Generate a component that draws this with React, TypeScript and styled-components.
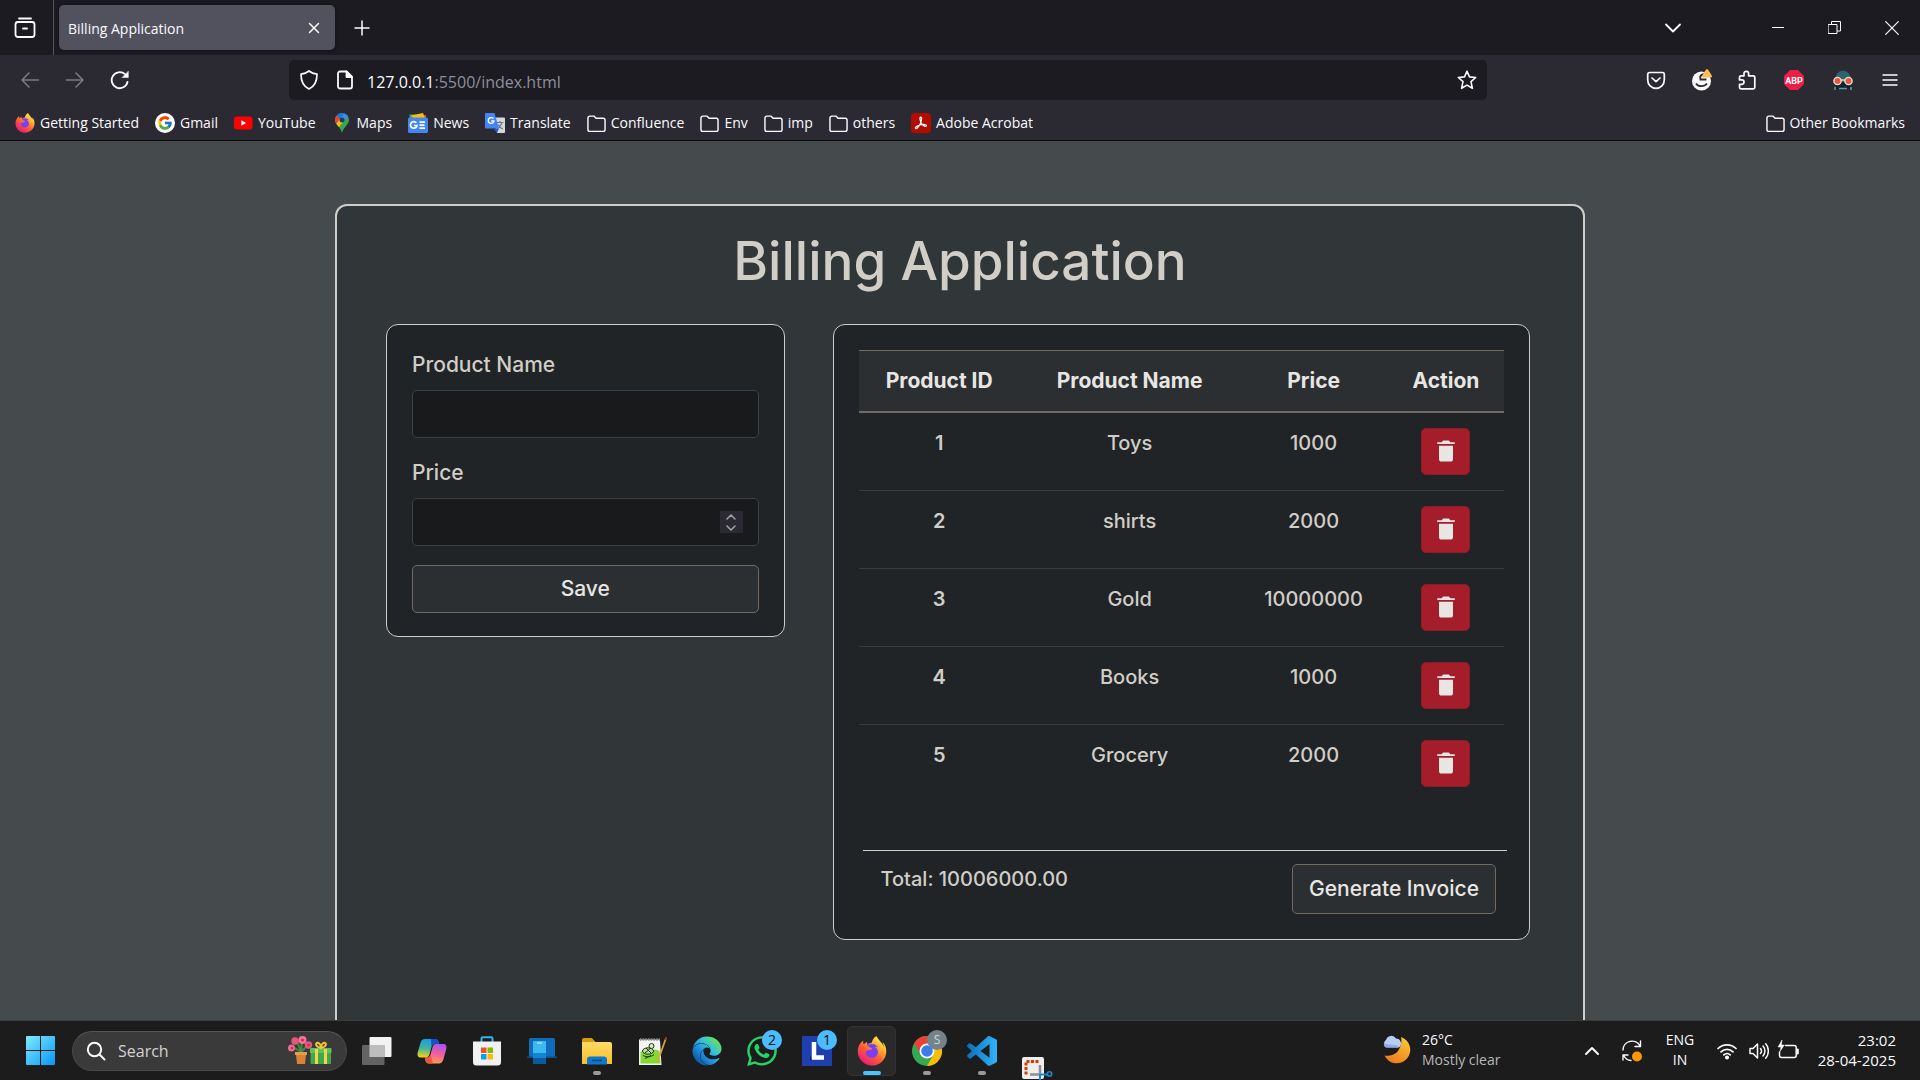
import React, { useState } from "react";
import styled, { createGlobalStyle, css } from "styled-components";
import { IoMdTrash } from "react-icons/io";
import { FaEdge, FaFirefoxBrowser, FaWhatsapp } from "react-icons/fa";
import { FcGoogle } from "react-icons/fc";
import { BiLogoVisualStudio } from "react-icons/bi";

const uiFont = `"Segoe UI", "Open Sans", "Noto Sans", sans-serif`;
const pageFont = `Inter, "Open Sans", sans-serif`;

const GlobalStyle = createGlobalStyle`
  *, *::before, *::after { box-sizing: border-box; }
  body { margin: 0; background: #1c1b22; }
  button, input { font: inherit; color: inherit; }
  button { padding: 0; border: 0; background: none; cursor: pointer; }
  svg { display: block; flex: none; }
`;

const Desktop = styled.div`
  display: flex;
  flex-direction: column;
  height: 100vh;
  overflow: hidden;
  font-family: ${uiFont};
  color: #fbfbfe;
`;

/* ---------- browser chrome ---------- */

const TabStrip = styled.header`
  display: flex;
  align-items: center;
  height: 55px;
  flex: none;
  background: #1c1b22;
`;

const IconButton = styled.button<{ $w?: number; $dim?: boolean }>`
  display: flex;
  align-items: center;
  justify-content: center;
  width: ${(p) => p.$w ?? 45}px;
  height: 40px;
  flex: none;
  color: ${(p) => (p.$dim ? "#7c7b82" : "#fbfbfe")};
`;

const LibraryCell = styled.div`
  display: flex;
  align-items: center;
  height: 100%;
  padding-right: 4px;
  border-right: 1px solid #55545c;
`;

const Tab = styled.div`
  display: flex;
  align-items: center;
  justify-content: space-between;
  width: 276px;
  height: 45px;
  margin: 0 4px 0 5px;
  padding: 1px 0 0 9px;
  border-radius: 5px;
  background: #52525e;
  font-size: 14px;
  box-shadow: 0 0 4px rgba(0, 0, 0, 0.5);
`;

const WindowControls = styled.div`
  display: flex;
  margin-left: 51px;
`;

const Spacer = styled.div`
  flex: 1;
`;

const NavBar = styled.div`
  display: flex;
  align-items: center;
  height: 50px;
  flex: none;
  padding: 0 8px 0 7px;
  background: #2b2a33;
`;

const AddressBar = styled.form`
  display: flex;
  align-items: center;
  flex: 0 1 1198px;
  height: 40px;
  margin-left: 147px;
  border-radius: 5px;
  background: #1c1b22;
`;

const Address = styled.div`
  flex: 1;
  margin-left: 6px;
  padding-top: 3px;
  font-size: 16px;
  color: #8f8f99;
  span { color: #fbfbfe; }
`;

const Extensions = styled.div`
  display: flex;
  align-items: center;
`;

const BookmarksBar = styled.nav`
  display: flex;
  align-items: center;
  height: 36px;
  flex: none;
  padding: 1px 7px 0 7px;
  background: #2b2a33;
  border-bottom: 1px solid #0c0c0d;
`;

const Bookmark = styled.a`
  display: flex;
  align-items: center;
  gap: 5px;
  padding: 0 8px;
  font-size: 14px;
  line-height: 20px;
  white-space: nowrap;
  color: #fbfbfe;
  text-decoration: none;
`;

/* ---------- billing page ---------- */

const Viewport = styled.main`
  flex: 1;
  min-height: 0;
  overflow: hidden;
  padding-top: 63px;
  background: #454a4d;
  font-family: ${pageFont};
  font-size: 20px;
  line-height: 30px;
  font-weight: 500;
  color: #d1cdc7;
`;

const Container = styled.section`
  max-width: 1250px;
  min-height: 1000px;
  margin: 0 auto;
  padding: 25px 53px 50px 49px;
  border: 2px solid #d1cdc7;
  border-radius: 12px;
  background: #313638;
`;

const Title = styled.h1`
  margin: 0 0 33px;
  padding-left: 4px;
  text-align: center;
  font-size: 53px;
  line-height: 60px;
  font-weight: 500;
`;

const Columns = styled.div`
  display: grid;
  grid-template-columns: minmax(0, 4fr) minmax(0, 7fr);
  gap: 48px;
  align-items: start;
`;

const Card = styled.div`
  padding: 25px;
  border: 1px solid #d1cdc7;
  border-radius: 12px;
  background: #202426;
`;

const ProductForm = styled(Card).attrs({ as: "form" })`
  padding-bottom: 23px;
  font-size: 21px;
`;

const Field = styled.div`
  display: flex;
  flex-direction: column;
  gap: 10px;
  margin-bottom: 20px;
  & + & { margin-bottom: 19px; }
`;

const InputBox = styled.div`
  display: flex;
  align-items: center;
  height: 48px;
  padding: 0 15px;
  border: 1px solid #3b4144;
  border-radius: 5px;
  background: #181a1b;
`;

const TextInput = styled.input`
  flex: 1;
  min-width: 0;
  padding: 0;
  border: 0;
  outline: 0;
  background: transparent;
  appearance: textfield;
  &::-webkit-inner-spin-button { appearance: none; }
`;

const Stepper = styled.div`
  display: flex;
  flex-direction: column;
  width: 23px;
  height: 22px;
  background: #2b2a33;
  color: #a3a3ac;
  button {
    display: flex;
    flex: 1;
    align-items: center;
    justify-content: center;
  }
`;

const buttonLook = css`
  border: 1px solid #736b5e;
  border-radius: 5px;
  background: #2b2f31;
  color: #e8e6e3;
  font-size: 21px;
`;

const SaveButton = styled.button`
  ${buttonLook}
  width: 100%;
  height: 48px;
`;

const InvoiceButton = styled.button`
  ${buttonLook}
  width: 204px;
  height: 50px;
  white-space: nowrap;
`;

const Table = styled.table`
  width: 100%;
  border-collapse: collapse;
  table-layout: fixed;
  text-align: center;
  thead th {
    height: 61px;
    padding: 0;
    border-top: 1px solid #736b5e;
    border-bottom: 2px solid #736b5e;
    background: #2b2f31;
    color: #e8e6e3;
    font-size: 21px;
    font-weight: 700;
  }
  tbody th, tbody td {
    height: 78px;
    padding: 15px 0;
    border-top: 1px solid #373c3e;
    vertical-align: top;
    font-weight: 500;
  }
  tbody th { font-weight: 600; }
`;

const DeleteButton = styled.button`
  display: flex;
  align-items: center;
  justify-content: center;
  width: 49px;
  height: 47px;
  margin: 0 auto;
  border: 1px solid #8e1c28;
  border-radius: 5px;
  background: #a51d2a;
  color: #e8e6e3;
`;

const TotalRow = styled.div`
  display: flex;
  justify-content: space-between;
  margin: 48px -3px 0 4px;
  padding: 13px 11px 0 18px;
  border-top: 1px solid #d1cdc7;
`;

/* ---------- taskbar ---------- */

const Taskbar = styled.footer`
  display: flex;
  align-items: center;
  height: 60px;
  flex: none;
  padding: 0 24px 0 13px;
  border-top: 1px solid #3a3c3d;
  background: #1c1c1c;
  font-size: 14px;
  line-height: 20px;
`;

const TaskItem = styled.button<{ $active?: boolean; $end?: boolean }>`
  position: relative;
  display: flex;
  align-items: center;
  justify-content: center;
  width: 49px;
  height: 50px;
  margin: 0 3px;
  flex: none;
  align-self: ${(p) => (p.$end ? "flex-end" : "center")};
  border: 1px solid ${(p) => (p.$active ? "#333" : "transparent")};
  border-radius: 5px;
  background: ${(p) => (p.$active ? "#292929" : "transparent")};
  ${(p) => p.$end && "height: 23px;"}
`;

const Running = styled.span<{ $active?: boolean }>`
  position: absolute;
  bottom: 0;
  left: 50%;
  width: ${(p) => (p.$active ? 18 : 8)}px;
  height: 4px;
  transform: translateX(-50%);
  border-radius: 2px;
  background: ${(p) => (p.$active ? "#4cc2ff" : "#9a9a9a")};
`;

const Badge = styled.span<{ $grey?: boolean }>`
  position: absolute;
  top: 3px;
  right: 3px;
  width: 20px;
  height: 20px;
  border-radius: 50%;
  text-align: center;
  font-size: ${(p) => (p.$grey ? 12 : 14)}px;
  background: ${(p) => (p.$grey ? "#74828b" : "#4cbcff")};
  color: ${(p) => (p.$grey ? "#cfd6da" : "#111")};
`;

const SearchPill = styled.label`
  display: flex;
  align-items: center;
  width: 275px;
  height: 40px;
  margin: 0 2px 0 4px;
  padding: 0 14px 0 13px;
  border: 1px solid #474747;
  border-top-color: #565656;
  border-radius: 20px;
  background: #3a3a3a;
  font-size: 16px;
  input {
    flex: 1;
    min-width: 0;
    margin-left: 12px;
    padding: 0;
    border: 0;
    outline: 0;
    background: transparent;
    color: #d2d2d2;
  }
  input::placeholder { color: #d2d2d2; opacity: 1; }
`;

const Weather = styled.div`
  display: flex;
  align-items: center;
  gap: 10px;
  width: 191px;
  padding-bottom: 2px;
  small {
    display: block;
    font-size: 14px;
    color: #b8b8b8;
  }
`;

const Language = styled.div`
  width: 56px;
  padding-bottom: 2px;
  text-align: center;
`;

const Clock = styled.div`
  width: 92px;
  padding-bottom: 2px;
  font-size: 15px;
  text-align: right;
`;

/* ---------- drawings ---------- */

type StrokeProps = { size?: number; w?: number; children: React.ReactNode; box?: number };

const Stroke = ({ size = 20, w = 1.5, box = 20, children }: StrokeProps) => (
  <svg
    width={size}
    height={size}
    viewBox={`0 0 ${box} ${box}`}
    fill="none"
    stroke="currentColor"
    strokeWidth={w}
    strokeLinecap="round"
    strokeLinejoin="round"
  >
    {children}
  </svg>
);

const HiddenSvg = styled.svg`
  position: absolute;
`;

const Gradients = () => (
  <HiddenSvg width="0" height="0" aria-hidden="true">
    <defs>
      <linearGradient id="fox" x1="0.85" y1="0.05" x2="0.2" y2="0.95">
        <stop offset="0" stopColor="#fff44f" />
        <stop offset="0.3" stopColor="#ffb02e" />
        <stop offset="0.6" stopColor="#ff5a36" />
        <stop offset="1" stopColor="#e8197d" />
      </linearGradient>
      <linearGradient id="edge" x1="0.9" y1="0.2" x2="0.2" y2="0.9">
        <stop offset="0" stopColor="#66dd66" />
        <stop offset="0.35" stopColor="#33c3d8" />
        <stop offset="0.65" stopColor="#1f8fe0" />
        <stop offset="1" stopColor="#0c59a4" />
      </linearGradient>
      <linearGradient id="win" x1="0" y1="0" x2="1" y2="1">
        <stop offset="0" stopColor="#7cecff" />
        <stop offset="1" stopColor="#0a96f5" />
      </linearGradient>
      <linearGradient id="moon" x1="0.8" y1="0" x2="0.3" y2="1">
        <stop offset="0" stopColor="#fcc838" />
        <stop offset="1" stopColor="#ee7a1b" />
      </linearGradient>
      <linearGradient id="copilotA" x1="0.5" y1="0" x2="0.4" y2="1">
        <stop offset="0" stopColor="#1a9bf0" />
        <stop offset="0.5" stopColor="#3bb5a0" />
        <stop offset="1" stopColor="#f7d117" />
      </linearGradient>
      <linearGradient id="copilotB" x1="0.6" y1="0" x2="0.4" y2="1">
        <stop offset="0" stopColor="#a855f0" />
        <stop offset="0.5" stopColor="#f0609a" />
        <stop offset="1" stopColor="#ff9a4d" />
      </linearGradient>
      <linearGradient id="folder" x1="0" y1="0" x2="0" y2="1">
        <stop offset="0" stopColor="#ffd969" />
        <stop offset="1" stopColor="#fbbf24" />
      </linearGradient>
      <linearGradient id="vscode" x1="0" y1="0" x2="1" y2="0">
        <stop offset="0" stopColor="#0a6fbd" />
        <stop offset="1" stopColor="#33b2f7" />
      </linearGradient>
    </defs>
  </HiddenSvg>
);

const Firefox = ({ size }: { size: number }) => (
  <svg width={size} height={size} viewBox="0 0 32 32">
    <circle cx="15.5" cy="16" r="9" fill="#7a3ff0" />
    <FaFirefoxBrowser size={32} fill="url(#fox)" />
  </svg>
);

const Folder = () => (
  <Stroke size={19}>
    <path d="M1 4.200a2 2 0 0 1 2-2h4.300l2.200 2.300h7.500a2 2 0 0 1 2 2v9.800a2 2 0 0 1-2 2H3a2 2 0 0 1-2-2z" />
  </Stroke>
);

const YouTube = () => (
  <svg width="19" height="20" viewBox="0 0 19 20">
    <rect y="3.5" width="18.5" height="13" rx="3" fill="#f00" />
    <path d="M7.3 7.3v5.4l4.8-2.7z" fill="#fff" />
  </svg>
);

const Maps = () => (
  <svg width="20" height="20" viewBox="0 0 20 20">
    <path d="M10 0a7 7 0 0 0-7 7c0 4.5 5.3 6.500 7 13 1.700-6.500 7-8.500 7-13a7 7 0 0 0-7-7z" fill="#34a853" />
    <path d="M10 0a7 7 0 0 0-5.400 2.500L8 5.500 12.200.4A7 7 0 0 0 10 0z" fill="#1a73e8" />
    <path d="M4.600 2.500A7 7 0 0 0 3 7c0 1.500.6 2.700 1.300 3.800L8.200 6z" fill="#ea4335" />
    <path d="M4.300 10.800 11.800 9 8 5.800zM4.300 10.800l2.500 3.200 5.400-6.200z" fill="#fbbc04" />
    <path d="m12.200.4-4.200 5 3.800 3.400 4.400-5.200A7 7 0 0 0 12.200.4z" fill="#4285f4" />
    <circle cx="10" cy="7" r="2.500" fill="#1c3f5e" />
  </svg>
);

const News = () => (
  <svg width="20" height="20" viewBox="0 0 20 20">
    <path d="M1.500 1.500h8l2 4h-10z" fill="#34a853" />
    <path d="M9 2h9v4H9z" fill="#ea4335" />
    <path d="M3 2.500 15 0l2 5H5z" fill="#fbbc04" />
    <rect y="4.500" width="20" height="15.500" rx="1.500" fill="#4285f4" />
    <path d="M8.300 9.800a3.300 3.300 0 1 0 .7 2.700H6M11.500 9.200H17M11.500 12.200h5M11.500 15.200H17" fill="none" stroke="#fff" strokeWidth="1.700" />
  </svg>
);

const Translate = () => (
  <svg width="20" height="20" viewBox="0 0 20 20">
    <path d="M8 4.500h11a1 1 0 0 1 1 1V19a1 1 0 0 1-1 1h-7z" fill="#d6d8db" />
    <path d="M11.500 9.500h7M15 8v1.500M17 9.500c-.8 3-2.500 4.700-4.500 6M13 11.500c1 2 2.700 3.500 4.800 4.400" stroke="#6b7b8c" strokeWidth="1.200" fill="none" />
    <path d="M1 0h8.500L14 15.500H1a1 1 0 0 1-1-1V1a1 1 0 0 1 1-1z" fill="#4285f4" />
    <path d="M8.400 5.700a2.900 2.900 0 1 0 .6 2.300H6.200" stroke="#fff" strokeWidth="1.300" fill="none" />
    <path d="M8.500 15.500H14L12 20z" fill="#2857c4" />
  </svg>
);

const Acrobat = () => (
  <svg width="20" height="20" viewBox="0 0 20 20">
    <rect width="20" height="20" rx="3.500" fill="#b30b00" />
    <path d="M9.700 4.200c1.700 0 .7 4.800-1.400 8.300-1.300 2.200-2.900 3.500-3.700 2.900-1.500-1.300 3.600-3.700 7-3.900 2.500-.2 4 .5 3.800 1.400-.4 1.700-4.100-.5-5.300-3.100C9 7.300 8.400 4.200 9.700 4.200z" fill="none" stroke="#fff" strokeWidth="1.200" />
  </svg>
);

const CloudMoon = () => (
  <svg width="31" height="31" viewBox="0 0 31 31">
    <path d="M20 3a13.500 13.500 0 1 1-16.500 18.500c3 1 10 0 13.500-4.500S21 6 20 3z" fill="url(#moon)" />
    <path d="M5 13.500a4.500 4.500 0 0 1 0-7.500 5.500 5.500 0 0 1 10-1.500 5 5 0 0 1 3 9z" fill="#b9ccf5" />
    <path d="M5 13.500A4 4 0 0 1 3 9c4 3 10 0 15 3.500a3 3 0 0 1-1 1z" fill="#8facea" />
  </svg>
);

const SearchGifts = () => (
  <svg width="44" height="30" viewBox="0 0 44 30">
    <path d="M13 16 5 11M13 16 9 5M13 16l1-11M13 16l8-8" stroke="#3e8e41" strokeWidth="2" />
    <circle cx="7" cy="5" r="3.700" fill="#e8567c" />
    <circle cx="14.500" cy="4" r="4" fill="#f27696" />
    <circle cx="3.500" cy="12" r="3.500" fill="#ef6c90" />
    <circle cx="20.500" cy="9" r="3.700" fill="#e8567c" />
    <circle cx="14.500" cy="4" r="1.500" fill="#c92d57" />
    <circle cx="4" cy="12" r="1.300" fill="#c92d57" />
    <circle cx="20.500" cy="9" r="1.300" fill="#c92d57" />
    <path d="M7 16h12v3h-1l-1 9H9L8 19H7z" fill="#d98238" />
    <path d="M7 16h12v3H7z" fill="#e99950" />
    <rect x="22.500" y="13" width="20.500" height="15" rx="1" fill="#3fa84e" />
    <rect x="22" y="12" width="21.500" height="5" rx="1" fill="#5cc45f" />
    <path d="M27 13h3v15h-3zM36 13h3v15h-3z" fill="#f7d34a" />
    <path d="M33 12c-5-1-6-4-4-5s4 2 4 5c0-3 2-6 4-5s1 4-4 5z" fill="none" stroke="#f7c52e" strokeWidth="2" />
  </svg>
);

const TaskView = () => (
  <svg width="30" height="30" viewBox="0 0 30 30">
    <rect x="7.500" y="1" width="22" height="20" rx="1" fill="#f2f2f2" />
    <rect y="9" width="22.500" height="20" rx="1" fill="#6b6b6b" opacity=".9" />
    <path d="M7.500 9h15v12h-15z" fill="#bdbdbd" />
  </svg>
);

const Copilot = () => (
  <svg width="30" height="30" viewBox="0 0 30 30">
    <path d="M8 3h10c2 0 3 1 3.500 3l.5 2h-4c-2 0-3 1-3.500 3l-2 7c-.6 2-1.500 3.500-4 3.500H4c-3 0-4-2-3.300-5L3.500 7C4.200 4.500 5.500 3 8 3z" fill="url(#copilotA)" />
    <path d="M14 3h4c2 0 3 1 3.500 3l.5 2h-4c-2 0-3 1-3.500 3z" fill="#1450c8" />
    <path d="M22 27.500H12c-2 0-3-1-3.500-3L8 21.500h2c2 0 3-1 3.500-3l2-7c.6-2 1.500-3.500 4-3.500H26c3 0 4 2 3.300 5l-2.800 10c-.7 2.500-2 4.500-4.500 4.500z" fill="url(#copilotB)" />
    <path d="M16 27.500h-4c-2 0-3-1-3.500-3L8 21.500h2c2 0 3-1 3.500-3z" fill="#f2533c" />
  </svg>
);

const Store = () => (
  <svg width="30" height="30" viewBox="0 0 30 30">
    <path d="M9.500 7V2.500a1.200 1.200 0 0 1 1.200-1.200h8.600a1.200 1.200 0 0 1 1.200 1.200V7" fill="none" stroke="#2db7f0" strokeWidth="2" />
    <path d="M1 5.500h28V26a3.500 3.500 0 0 1-3.500 3.500h-21A3.500 3.500 0 0 1 1 26z" fill="#f1f1f1" />
    <path d="M9 11.500h5.500V17H9z" fill="#f25022" />
    <path d="M15.500 11.500H21V17h-5.500z" fill="#7fba00" />
    <path d="M9 18h5.500v5.500H9z" fill="#00a4ef" />
    <path d="M15.500 18H21v5.500h-5.500z" fill="#ffb900" />
  </svg>
);

const PhoneLink = () => (
  <svg width="30" height="30" viewBox="0 0 30 30">
    <rect x="2" y="2" width="26" height="19" rx="1.500" fill="#0f6cbd" />
    <path d="M0 20.500h30v1.500H0z" fill="#0a4f92" />
    <path d="M7 5h11a1 1 0 0 1 1 1v11H6V6a1 1 0 0 1 1-1z" fill="#3db8f0" />
    <path d="M6 17h13v11H6z" fill="#1486d0" />
    <path d="M6 22h13v6H6z" fill="#0b5a9e" />
    <path d="M10 7h5" stroke="#c8f1ff" strokeWidth="1.200" />
  </svg>
);

const Explorer = () => (
  <svg width="30" height="30" viewBox="0 0 30 30">
    <path d="M0 4a2 2 0 0 1 2-2h8l3.500 4H0z" fill="#d99a0b" />
    <path d="M0 6h28a2 2 0 0 1 2 2v20H0z" fill="url(#folder)" />
    <path d="M5 28.500v-5a3 3 0 0 1 3-3h14a3 3 0 0 1 3 3v5z" fill="#1078cc" />
    <path d="M10 24.500h10" stroke="#0a4a8a" strokeWidth="1.600" />
  </svg>
);

const NotepadPP = () => (
  <svg width="30" height="30" viewBox="0 0 30 30">
    <path d="M2 3.500h21l1.500 25.500H2z" fill="#f4f4ee" />
    <path d="M3.500 16c6-3 14-3 19-1l1 12.500h-20z" fill="#84d936" />
    <path d="M3 3.500h20" stroke="#8b8b8b" strokeWidth="2.500" strokeDasharray="1.500 1.200" />
    <ellipse cx="11" cy="15" rx="5.500" ry="3.200" fill="#b9dfa0" stroke="#24331c" />
    <circle cx="14.500" cy="10" r="2.500" fill="#d5ecc4" stroke="#24331c" />
    <path d="M6 19.500c4 2 8 1.500 11-1M8 22.500l6-3M9 12l5 5M14 12l-6 5" stroke="#24331c" fill="none" />
    <path d="M29 2 20.500 26" stroke="#e8a13a" strokeWidth="1.700" />
    <path d="m29.500 1-1 3" stroke="#8c3a2b" strokeWidth="2" />
  </svg>
);

const Chrome = () => (
  <svg width="30" height="30" viewBox="0 0 30 30">
    <circle cx="15" cy="15" r="15" fill="#34a853" />
    <path d="M2 7.500A15 15 0 0 1 28 7.500H15L9 18.500z" fill="#ea4335" />
    <path d="M28 7.500A15 15 0 0 1 15 30l6.500-11.500L15 7.500z" fill="#fbbc04" />
    <circle cx="15" cy="15" r="7.500" fill="#fff" />
    <circle cx="15" cy="15" r="5.800" fill="#3b7ded" />
  </svg>
);

const LApp = () => (
  <svg width="30" height="30" viewBox="0 0 30 30">
    <path d="M0 0h30v30H0z" fill="#1f3fae" />
    <path d="m8 20 3 3-3 2z" fill="#101f5c" />
    <path d="M12 6v15.500h10" fill="none" stroke="#fff" strokeWidth="4.500" />
  </svg>
);

const Snip = () => (
  <svg width="32" height="23" viewBox="0 0 32 23">
    <rect x="1" width="22" height="22" rx="2" fill="#eee" />
    <path d="M5 17.500V4.500H18" fill="none" stroke="#d83b01" strokeWidth="3" strokeDasharray="3 1.500" />
    <path d="M9 17.500h10V8" fill="none" stroke="#8b9096" strokeWidth="2.500" />
    <path d="M19 17.500h7M19 17v6" stroke="#1887d3" strokeWidth="2" />
    <circle cx="28.500" cy="17" r="2.200" fill="none" stroke="#1887d3" strokeWidth="1.600" />
  </svg>
);

const bookmarks: { label: string; icon: React.ReactNode }[] = [
  { label: "Getting Started", icon: <Firefox size={20} /> },
  {
    label: "Gmail",
    icon: (
      <svg width="20" height="20" viewBox="0 0 20 20">
        <circle cx="10" cy="10" r="10" fill="#fff" />
        <FcGoogle size={16} x={2} y={2} />
      </svg>
    ),
  },
  { label: "YouTube", icon: <YouTube /> },
  { label: "Maps", icon: <Maps /> },
  { label: "News", icon: <News /> },
  { label: "Translate", icon: <Translate /> },
  { label: "Confluence", icon: <Folder /> },
  { label: "Env", icon: <Folder /> },
  { label: "imp", icon: <Folder /> },
  { label: "others", icon: <Folder /> },
  { label: "Adobe Acrobat", icon: <Acrobat /> },
];

const initialProducts = [
  { id: 1, name: "Toys", price: 1000 },
  { id: 2, name: "shirts", price: 2000 },
  { id: 3, name: "Gold", price: 10000000 },
  { id: 4, name: "Books", price: 1000 },
  { id: 5, name: "Grocery", price: 2000 },
];

const BrowserChrome = () => (
  <>
    <TabStrip>
      <LibraryCell>
        <IconButton $w={49} aria-label="Recent browsing">
          <Stroke w={1.8} size={22} box={22}>
            <path d="M5 1.500h12" />
            <path d="M3.500 4.800h15" />
            <rect x="1.500" y="5" width="19" height="15" rx="2.500" />
            <path d="M9 11.500h4" />
          </Stroke>
        </IconButton>
      </LibraryCell>
      <Tab>
        Billing Application
        <IconButton $w={42} aria-label="Close tab">
          <Stroke size={12} box={12}><path d="m1.500 1.500 9 9M10.500 1.500l-9 9" /></Stroke>
        </IconButton>
      </Tab>
      <IconButton aria-label="New tab">
        <Stroke size={16} box={16}><path d="M8 1v14M1 8h14" /></Stroke>
      </IconButton>
      <Spacer />
      <IconButton $w={50} aria-label="List all tabs">
        <Stroke w={1.800}><path d="m3 6.500 7 7 7-7" /></Stroke>
      </IconButton>
      <WindowControls>
        <IconButton $w={57} aria-label="Minimise">
          <Stroke w={1} size={12} box={12}><path d="M0 5.500h12" /></Stroke>
        </IconButton>
        <IconButton $w={57} aria-label="Restore">
          <Stroke w={1} size={13} box={13}><path d="M.5 3.500h8.500v9H.5zM3.500 3V.5h9v9.500H9.500" strokeLinejoin="miter" /></Stroke>
        </IconButton>
        <IconButton $w={57} aria-label="Close window">
          <Stroke w={1.200} size={14} box={14}><path d="m.7.700 12.600 12.600M13.300.700.700 13.300" /></Stroke>
        </IconButton>
      </WindowControls>
    </TabStrip>

    <NavBar>
      <IconButton $dim aria-label="Back">
        <Stroke><path d="M18.500 10H2M9 3l-7 7 7 7" /></Stroke>
      </IconButton>
      <IconButton $dim aria-label="Forward">
        <Stroke><path d="M1.500 10H18M11 3l7 7-7 7" /></Stroke>
      </IconButton>
      <IconButton aria-label="Reload">
        <Stroke w={1.800}>
          <path d="M17.500 12A8 8 0 1 1 15 4.200l2 1.800" />
          <path d="M18.300 1.500v6h-6z" fill="currentColor" strokeWidth="0.500" />
        </Stroke>
      </IconButton>
      <AddressBar onSubmit={(e) => e.preventDefault()}>
        <IconButton type="button" $w={40} aria-label="Tracking protection">
          <Stroke w={1.700}><path d="M10 1c2.500 2 5 2.800 8 3.200 0 7-2 12-8 14.800-6-2.800-8-7.800-8-14.800C5 3.800 7.500 3 10 1z" /></Stroke>
        </IconButton>
        <IconButton type="button" $w={32} aria-label="Site information">
          <Stroke w={1.800}>
            <path d="M5 1.500h6.500L17 7v9.500a2 2 0 0 1-2 2H5a2 2 0 0 1-2-2v-13a2 2 0 0 1 2-2z" />
            <path d="M11.500 1.500V7H17z" fill="currentColor" />
          </Stroke>
        </IconButton>
        <Address><span>127.0.0.1</span>:5500/index.html</Address>
        <IconButton type="button" $w={40} aria-label="Bookmark this page">
          <Stroke w={1.600}><path d="m10 1.200 2.500 5.700 6.200.6-4.700 4.200 1.400 6.600-5.400-3.200-5.400 3.200L6 11.700 1.300 7.500l6.200-.6z" /></Stroke>
        </IconButton>
      </AddressBar>
      <Spacer />
      <Extensions>
        <IconButton $w={47} aria-label="Pocket">
          <Stroke w={1.700}>
            <path d="M3.500 2.500h13A1.800 1.800 0 0 1 18.300 4.300V10a8.300 8.300 0 0 1-16.600 0V4.300A1.800 1.800 0 0 1 3.500 2.500z" />
            <path d="m6 8 4 3.700L14 8" />
          </Stroke>
        </IconButton>
        <IconButton aria-label="Account">
          <svg width="22" height="22" viewBox="0 0 22 22">
            <circle cx="10.500" cy="12" r="9.500" fill="#fbfbfe" />
            <path d="M5 14.500c2 3.500 8.500 3.500 11 0" stroke="#2b2a33" strokeWidth="1.800" fill="none" />
            <path d="M13.500 5.500a3.500 3.500 0 0 0-4 5h6" stroke="#2b2a33" strokeWidth="2" fill="none" />
            <path d="M16 0c1 0 5 6.500 5 7.700s-10 1.200-10 0S15 0 16 0z" fill="#ffbd4f" />
          </svg>
        </IconButton>
        <IconButton aria-label="Extensions">
          <Stroke w={1.700}>
            <path d="M7 5.800V3.600a2.300 2.300 0 0 1 4.600 0v2.200h4.700a1.500 1.500 0 0 1 1.500 1.500v10a1.500 1.500 0 0 1-1.500 1.500H4a1.500 1.500 0 0 1-1.500-1.500v-3h2.300a2.200 2.200 0 0 0 0-4.400H2.500V7.300A1.500 1.500 0 0 1 4 5.800z" />
          </Stroke>
        </IconButton>
        <IconButton $w={49} aria-label="Adblock Plus">
          <svg width="20" height="20" viewBox="0 0 20 20">
            <path d="M6 0h8l6 6v8l-6 6H6l-6-6V6z" fill="#ed1e45" />
            <text x="10" y="13.500" textAnchor="middle" fontSize="9" fontWeight="700" fontFamily="Roboto, sans-serif" fill="#fff">ABP</text>
          </svg>
        </IconButton>
        <IconButton $w={49} aria-label="Private extension">
          <svg width="20" height="20" viewBox="0 0 20 20">
            <path d="M2 10a8 9.500 0 0 1 16 0l-1 3H3z" fill="#2c6371" />
            <path d="M3 12h14v7H3z" fill="#15202b" />
            <circle cx="4.500" cy="11" r="3.600" fill="#e1573f" stroke="#f3dccb" strokeWidth="1.400" />
            <circle cx="15.500" cy="11" r="3.600" fill="#e1573f" stroke="#f3dccb" strokeWidth="1.400" />
            <path d="M8 10h4" stroke="#f3dccb" strokeWidth="1.400" />
            <path d="M6 18.500h8M2 17v3M18 17v3" stroke="#4e9db0" strokeWidth="1.600" />
          </svg>
        </IconButton>
        <IconButton aria-label="Menu">
          <Stroke w={1.500} size={16} box={16}><path d="M1 3h14M1 8h14M1 13h14" /></Stroke>
        </IconButton>
      </Extensions>
    </NavBar>

    <BookmarksBar>
      {bookmarks.map((b) => (
        <Bookmark href="#" key={b.label}>{b.icon}{b.label}</Bookmark>
      ))}
      <Spacer />
      <Bookmark href="#"><Folder />Other Bookmarks</Bookmark>
    </BookmarksBar>
  </>
);

const BillingPage = () => {
  const [products, setProducts] = useState(initialProducts);
  const [name, setName] = useState("");
  const [price, setPrice] = useState("");
  const total = products.reduce((sum, p) => sum + p.price, 0);

  const step = (by: number) => setPrice(String(Number(price) + by));
  const save = (e: React.FormEvent) => {
    e.preventDefault();
    if (!name || !price) return;
    const id = Math.max(0, ...products.map((p) => p.id)) + 1;
    setProducts([...products, { id, name, price: Number(price) }]);
    setName("");
    setPrice("");
  };

  return (
    <Viewport>
      <Container>
        <Title>Billing Application</Title>
        <Columns>
          <ProductForm onSubmit={save as never}>
            <Field>
              <label htmlFor="product-name">Product Name</label>
              <InputBox>
                <TextInput id="product-name" type="text" value={name} onChange={(e) => setName(e.target.value)} />
              </InputBox>
            </Field>
            <Field>
              <label htmlFor="price">Price</label>
              <InputBox>
                <TextInput id="price" type="number" value={price} onChange={(e) => setPrice(e.target.value)} />
                <Stepper>
                  <button type="button" aria-label="Increase" onClick={() => step(1)}>
                    <Stroke size={10} box={10}><path d="m1 7 4-4 4 4" /></Stroke>
                  </button>
                  <button type="button" aria-label="Decrease" onClick={() => step(-1)}>
                    <Stroke size={10} box={10}><path d="m1 3 4 4 4-4" /></Stroke>
                  </button>
                </Stepper>
              </InputBox>
            </Field>
            <SaveButton type="submit">Save</SaveButton>
          </ProductForm>

          <Card>
            <Table>
              <colgroup>
                <col width="25%" />
                <col width="34%" />
                <col width="23%" />
                <col width="18%" />
              </colgroup>
              <thead>
                <tr>
                  <th scope="col">Product ID</th>
                  <th scope="col">Product Name</th>
                  <th scope="col">Price</th>
                  <th scope="col">Action</th>
                </tr>
              </thead>
              <tbody>
                {products.map((p) => (
                  <tr key={p.id}>
                    <th scope="row">{p.id}</th>
                    <td>{p.name}</td>
                    <td>{p.price}</td>
                    <td>
                      <DeleteButton
                        aria-label={`Delete ${p.name}`}
                        onClick={() => setProducts(products.filter((q) => q.id !== p.id))}
                      >
                        <IoMdTrash size={28} />
                      </DeleteButton>
                    </td>
                  </tr>
                ))}
              </tbody>
            </Table>
            <TotalRow>
              <span>Total: {total.toFixed(2)}</span>
              <InvoiceButton>Generate Invoice</InvoiceButton>
            </TotalRow>
          </Card>
        </Columns>
      </Container>
    </Viewport>
  );
};

const WindowsTaskbar = () => (
  <Taskbar>
    <TaskItem aria-label="Start">
      <svg width="29" height="29" viewBox="0 0 29 29">
        <path d="M1 0h13v14H0V1a1 1 0 0 1 1-1zM15 0h13a1 1 0 0 1 1 1v13H15zM0 15h14v14H1a1 1 0 0 1-1-1zM15 15h14v13a1 1 0 0 1-1 1H15z" fill="url(#win)" />
      </svg>
    </TaskItem>
    <SearchPill>
      <Stroke w={2}>
        <circle cx="8.500" cy="8.500" r="6.700" />
        <path d="m13.500 13.500 5 5" />
      </Stroke>
      <input type="search" placeholder="Search" aria-label="Search" />
      <SearchGifts />
    </SearchPill>
    <TaskItem aria-label="Task view"><TaskView /></TaskItem>
    <TaskItem aria-label="Copilot"><Copilot /></TaskItem>
    <TaskItem aria-label="Microsoft Store"><Store /></TaskItem>
    <TaskItem aria-label="Phone Link"><PhoneLink /></TaskItem>
    <TaskItem aria-label="File Explorer"><Explorer /><Running /></TaskItem>
    <TaskItem aria-label="Notepad++"><NotepadPP /></TaskItem>
    <TaskItem aria-label="Edge"><FaEdge size={30} fill="url(#edge)" /></TaskItem>
    <TaskItem aria-label="WhatsApp"><FaWhatsapp size={34} fill="#25d366" /><Badge>2</Badge></TaskItem>
    <TaskItem aria-label="L"><LApp /><Badge>1</Badge></TaskItem>
    <TaskItem $active aria-label="Firefox"><Firefox size={30} /><Running $active /></TaskItem>
    <TaskItem aria-label="Chrome"><Chrome /><Badge $grey>S</Badge><Running /></TaskItem>
    <TaskItem aria-label="Visual Studio Code"><BiLogoVisualStudio size={36} fill="url(#vscode)" /><Running /></TaskItem>
    <TaskItem $end aria-label="Snipping Tool"><Snip /></TaskItem>
    <Spacer />
    <Weather>
      <CloudMoon />
      <div>26°C<small>Mostly clear</small></div>
    </Weather>
    <IconButton $w={40} aria-label="Hidden icons">
      <Stroke w={2} size={16} box={16}><path d="m2 11 6-6 6 6" /></Stroke>
    </IconButton>
    <IconButton $w={40} aria-label="Updates">
      <Stroke size={22} box={22} w={1.400}>
        <path d="M2 10a9 9 0 0 1 17-4M19.500 1v5.500H14M10 20.500A9 9 0 0 1 3 16M2 20v-5h5" />
        <circle cx="16" cy="16.500" r="5" fill="#ff9800" stroke="none" />
      </Stroke>
    </IconButton>
    <Language>ENG<br />IN</Language>
    <IconButton $w={38} aria-label="Network">
      <Stroke w={1.700}>
        <path d="M1 7.500a13 13 0 0 1 18 0M4 10.800a8.500 8.500 0 0 1 12 0M6.800 13.800a4.600 4.600 0 0 1 6.400 0" />
        <circle cx="10" cy="16.500" r="1.200" fill="currentColor" />
      </Stroke>
    </IconButton>
    <IconButton $w={26} aria-label="Volume">
      <Stroke w={1.500}>
        <path d="M1 7.500h3L8.500 3v14L4 12.500H1zM11.500 7.500a4 4 0 0 1 0 5M14 5a7.500 7.500 0 0 1 0 10M16.700 2.800a11 11 0 0 1 0 14.400" />
      </Stroke>
    </IconButton>
    <IconButton $w={32} aria-label="Battery">
      <Stroke w={1.500} size={22} box={22}>
        <path d="M8.500 5.500h8.700a2 2 0 0 1 2 2v8a2 2 0 0 1-2 2H4.500a2 2 0 0 1-2-2V12" />
        <path d="M20.800 9.500v4" strokeWidth="2" />
        <path d="M5 0 1 7h3l-1 4.500L7.300 5H4.500z" fill="currentColor" strokeWidth=".5" />
      </Stroke>
    </IconButton>
    <Clock>23:02<br />28-04-2025</Clock>
  </Taskbar>
);

export default function App() {
  return (
    <Desktop>
      <GlobalStyle />
      <Gradients />
      <BrowserChrome />
      <BillingPage />
      <WindowsTaskbar />
    </Desktop>
  );
}
